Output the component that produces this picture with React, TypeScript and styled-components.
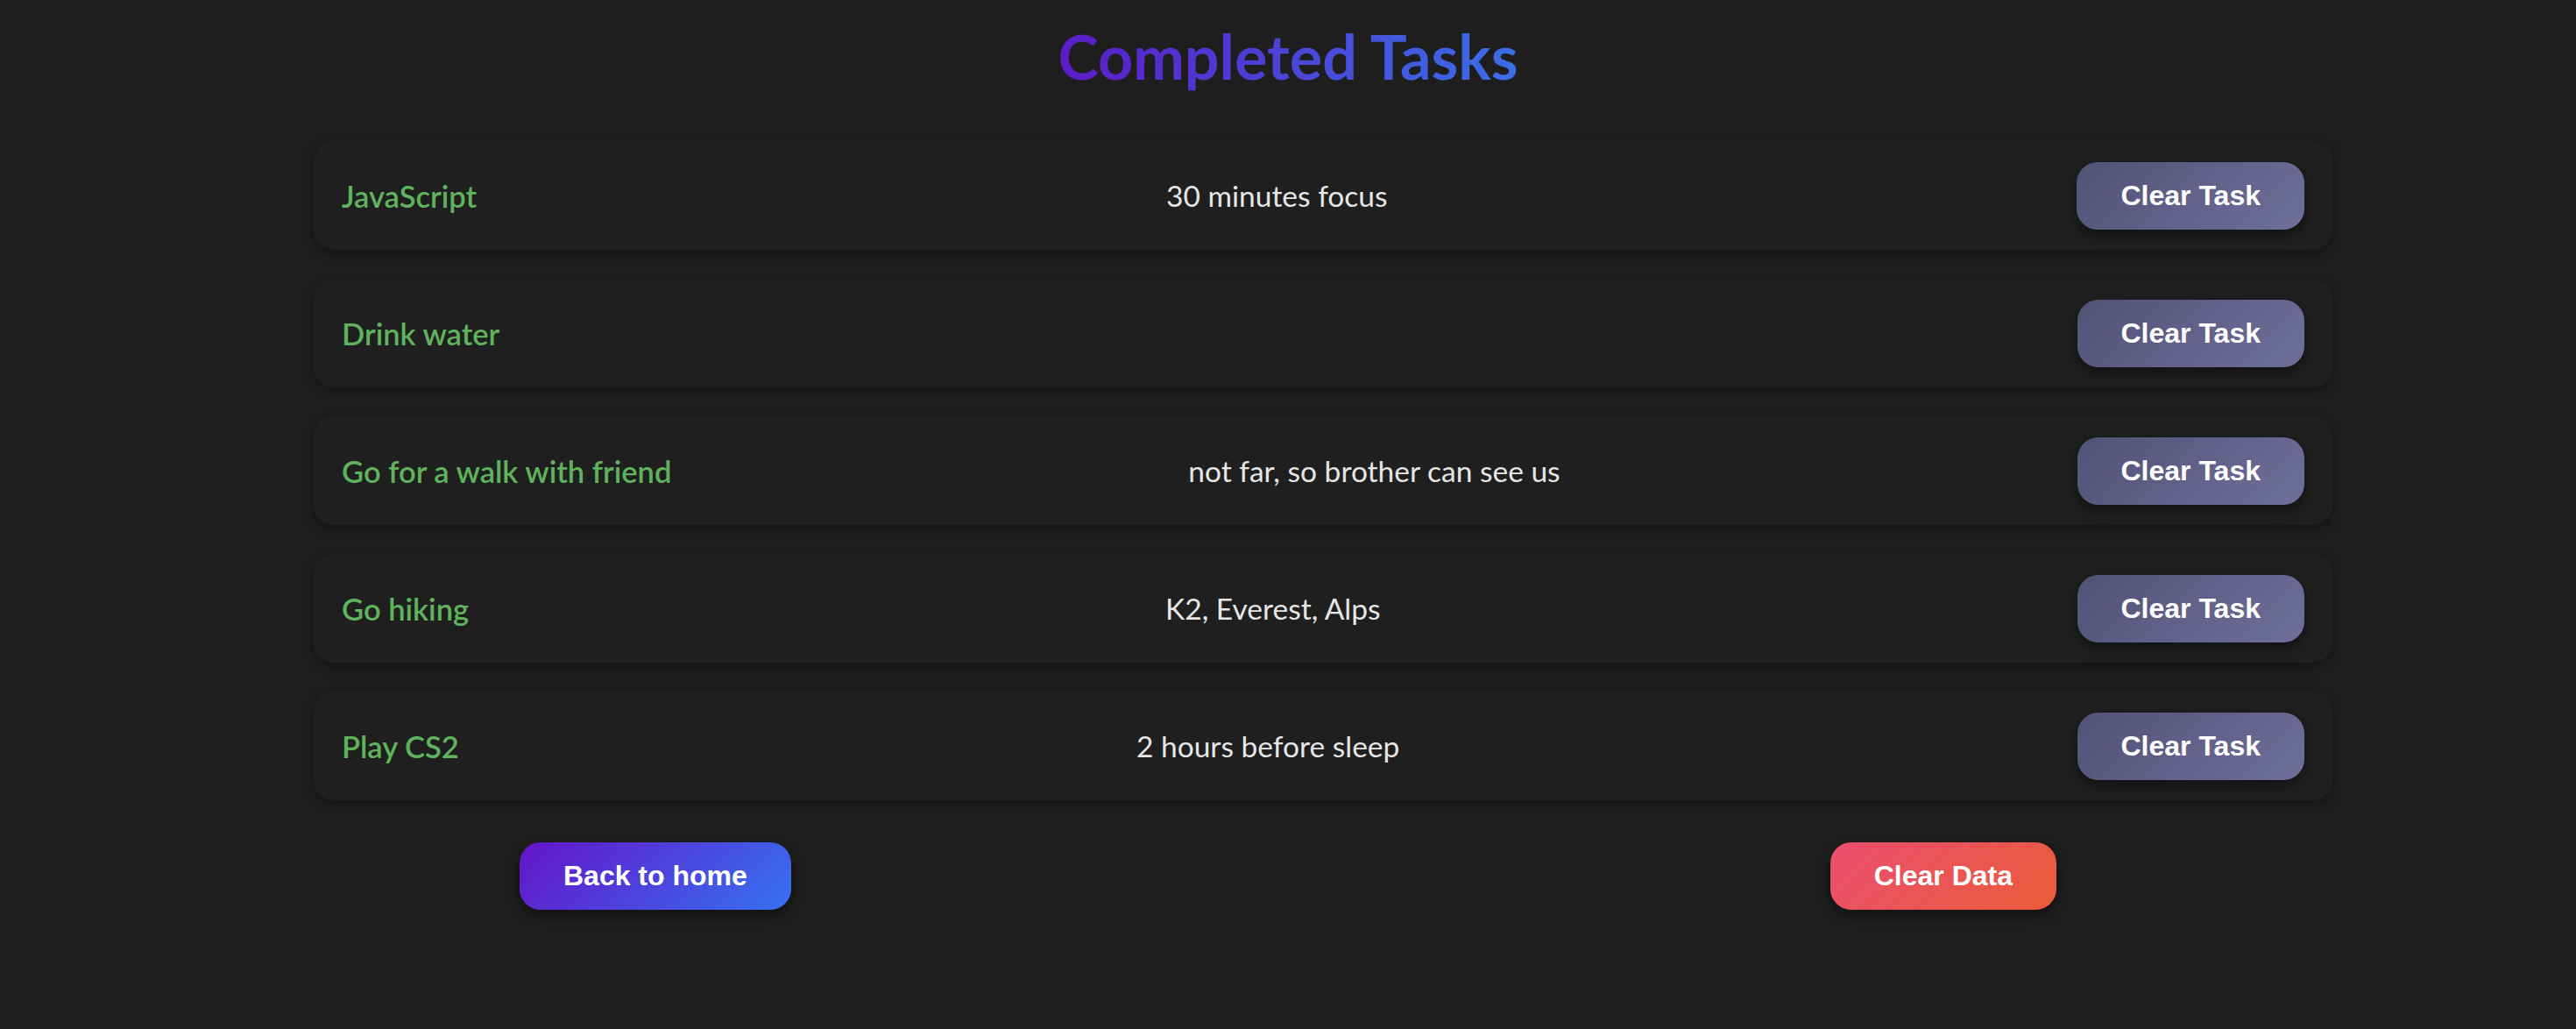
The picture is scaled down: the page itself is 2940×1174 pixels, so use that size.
import React from "react";
import styled, { createGlobalStyle } from "styled-components";

const GlobalStyle = createGlobalStyle`
  html, body {
    margin: 0;
    padding: 0;
    background: #1e1e1e;
  }
  body {
    font-family: Lato, "Noto Sans", sans-serif;
  }
`;

const Page = styled.main`
  min-height: 1174px;
  box-sizing: border-box;
  display: flex;
  flex-direction: column;
  align-items: center;
  padding-top: 22px;
`;

const Title = styled.h1`
  margin: 0;
  font-family: Lato, "Noto Sans", sans-serif;
  font-size: 70px;
  font-weight: 700;
  line-height: 84px;
  background: linear-gradient(90deg, #5b1cc6, #3a6ee6);
  -webkit-background-clip: text;
  background-clip: text;
  color: transparent;
`;

const List = styled.ul`
  list-style: none;
  width: 2384px;
  box-sizing: border-box;
  margin: 55px 0 0;
  padding: 0 0 0 80px;
  display: flex;
  flex-direction: column;
  gap: 33px;
`;

const Card = styled.li`
  height: 124px;
  box-sizing: border-box;
  padding: 0 32px;
  display: flex;
  align-items: center;
  justify-content: space-between;
  background: #1f1f1f;
  border-radius: 22px;
  box-shadow: 0 4px 14px rgba(0, 0, 0, 0.35);
`;

const TaskName = styled.span`
  font-size: 34.5px;
  font-weight: 600;
  color: #5fb35c;
`;

const TaskNote = styled.span`
  font-size: 33.5px;
  font-weight: 400;
  color: #e6e6e6;
`;

const Button = styled.button<{ $variant: "task" | "home" | "danger" }>`
  border: none;
  cursor: pointer;
  padding: 20px 50px;
  border-radius: 24px;
  font-family: "Liberation Sans", Arial, sans-serif;
  font-size: 32px;
  font-weight: 700;
  line-height: 37px;
  color: #ffffff;
  box-shadow: 0 6px 16px rgba(0, 0, 0, 0.45);
  background: ${({ $variant }) =>
    $variant === "task"
      ? "linear-gradient(135deg, #525275, #6f6f9d)"
      : $variant === "home"
      ? "linear-gradient(135deg, #6414c9, #3572f0)"
      : "linear-gradient(135deg, #ea4f70, #ea5b38)"};
`;

const Actions = styled.div`
  width: 100%;
  margin-top: 48px;
  display: flex;
  justify-content: space-around;
`;

const tasks = [
  { name: "JavaScript", note: "30 minutes focus" },
  { name: "Drink water", note: "" },
  { name: "Go for a walk with friend", note: "not far, so brother can see us" },
  { name: "Go hiking", note: "K2, Everest, Alps" },
  { name: "Play CS2", note: "2 hours before sleep" },
];

export default function App() {
  return (
    <>
      <GlobalStyle />
      <Page>
        <Title>Completed Tasks</Title>
        <List>
          {tasks.map((t) => (
            <Card key={t.name}>
              <TaskName>{t.name}</TaskName>
              <TaskNote>{t.note}</TaskNote>
              <Button $variant="task">Clear Task</Button>
            </Card>
          ))}
        </List>
        <Actions>
          <Button $variant="home">Back to home</Button>
          <Button $variant="danger">Clear Data</Button>
        </Actions>
      </Page>
    </>
  );
}
